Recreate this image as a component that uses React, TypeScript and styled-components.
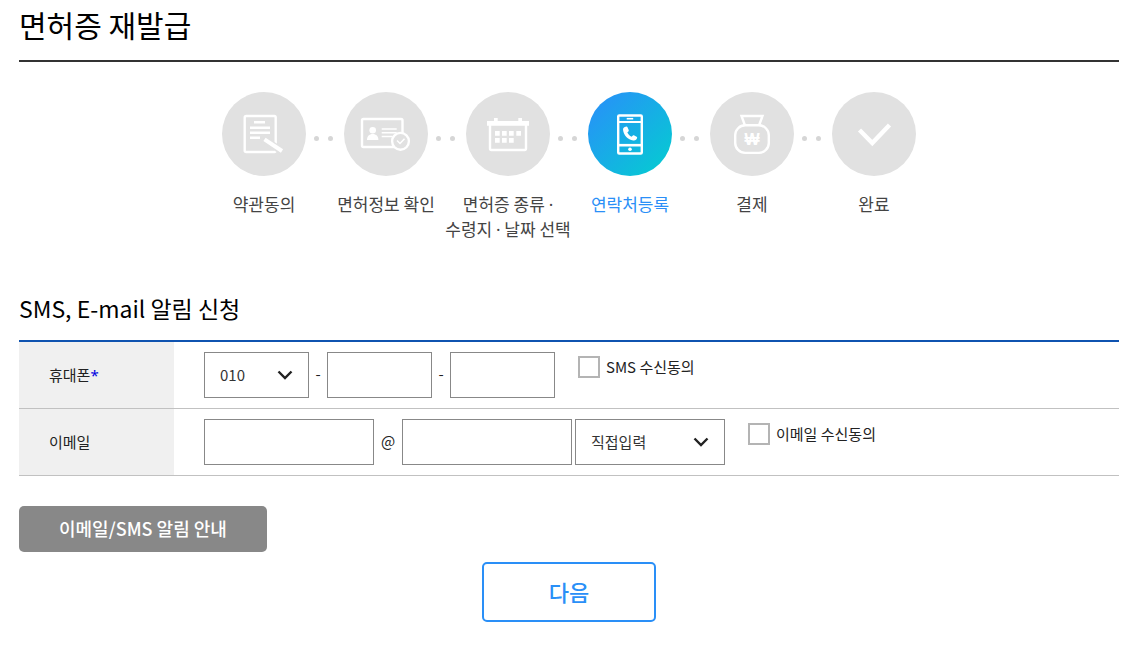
import React, { Fragment, useState } from "react";
import styled, { createGlobalStyle } from "styled-components";

const GlobalStyle = createGlobalStyle`
  *, *::before, *::after { box-sizing: border-box; }
  body {
    margin: 0;
    background: #fff;
    color: #222;
    font-family: "Noto Sans CJK KR", "Noto Sans", sans-serif;
    font-size: 15px;
  }
  button, input, select { font: inherit; color: inherit; }
`;

const Page = styled.main`
  padding: 0 11px 32px 19px;
`;

const PageTitle = styled.h1`
  margin: 0;
  padding: 2px 0 14px;
  border-bottom: 2px solid #333;
  color: #000;
  font-size: 30px;
  line-height: 44px;
  font-weight: 400;
`;

const Steps = styled.ol`
  display: flex;
  justify-content: center;
  margin: 30px 0 0;
  padding: 0;
  list-style: none;
`;

const StepItem = styled.li`
  display: flex;
  align-items: flex-start;
`;

const StepBody = styled.div`
  display: flex;
  flex-direction: column;
  align-items: center;
  gap: 15px;
  width: 84px;
`;

const StepCircle = styled.span<{ $active: boolean }>`
  display: block;
  width: 84px;
  height: 84px;
  border-radius: 50%;
  background: ${(p) =>
    p.$active ? "linear-gradient(135deg, #2a8dfb 0%, #03cfcf 100%)" : "#e1e1e1"};
`;

const StepIcon = styled.svg`
  display: block;
  width: 84px;
  height: 84px;
  fill: none;
  stroke: #fff;
  stroke-width: 2.4;
`;

const StepLabel = styled.span<{ $active: boolean }>`
  color: ${(p) => (p.$active ? "#2a8ff7" : "#444")};
  font-size: 17px;
  line-height: 25px;
  text-align: center;
  white-space: pre;
`;

const MiddleDot = styled.span`
  font-family: "Noto Sans", sans-serif;
  line-height: 1;
`;

const Dots = styled.span`
  display: flex;
  gap: 9px;
  width: 38px;
  padding: 44px 0 0 8px;

  &::before,
  &::after {
    content: "";
    width: 5px;
    height: 5px;
    border-radius: 50%;
    background: #d6d6d6;
  }
`;

const SectionTitle = styled.h2`
  margin: 47px 0 0;
  padding-bottom: 12px;
  color: #000;
  font-size: 23px;
  line-height: 40px;
  font-weight: 400;
`;

const FormTable = styled.table`
  width: 100%;
  border-top: 2px solid #0f53b0;
  border-spacing: 0;
`;

const HeadCell = styled.th`
  width: 155px;
  padding: 0 0 2px 30px;
  border-bottom: 1px solid #c1c1c1;
  background: #f0f0f0;
  font-weight: 400;
  text-align: left;
`;

const Required = styled.span`
  color: #0000e0;
  font-family: "Noto Sans", sans-serif;
  line-height: 1;
`;

const DataCell = styled.td`
  padding: 10px 30px;
  border-bottom: 1px solid #c1c1c1;
`;

const Fields = styled.div`
  display: flex;
  align-items: center;
`;

const TextBox = styled.input<{ $width: number }>`
  width: ${(p) => p.$width}px;
  height: 46px;
  padding: 0 15px;
  border: 1px solid #888;
  border-radius: 0;
  background: #fff;
`;

const SelectWrap = styled.span<{ $width: number; $gap?: number }>`
  display: grid;
  align-items: center;
  width: ${(p) => p.$width}px;
  margin-left: ${(p) => p.$gap ?? 0}px;

  & > * { grid-area: 1 / 1; }
`;

const SelectBox = styled.select`
  width: 100%;
  height: 46px;
  padding: 0 40px 2px 15px;
  border: 1px solid #888;
  border-radius: 0;
  background: #fff;
  color: #333;
  appearance: none;
`;

const Chevron = styled.svg`
  justify-self: end;
  width: 16px;
  height: 10px;
  margin-right: 16px;
  fill: none;
  stroke: #222;
  stroke-width: 2.4;
  pointer-events: none;
`;

const Separator = styled.span<{ $width: number }>`
  width: ${(p) => p.$width}px;
  padding-bottom: 4px;
  text-align: center;
`;

const Consent = styled.label`
  display: flex;
  align-items: center;
  align-self: flex-start;
  gap: 6px;
  margin: 4px 0 0 23px;
  line-height: 22px;
`;

const CheckBox = styled.input`
  width: 22px;
  height: 22px;
  margin: 0;
  border: 2px solid #b4b4b4;
  background: #fff;
  appearance: none;

  &:checked {
    background: #2a8ff7;
    box-shadow: inset 0 0 0 3px #fff;
  }
`;

const GuideButton = styled.button`
  display: block;
  height: 46px;
  margin-top: 30px;
  padding: 0 40px 2px;
  border: 0;
  border-radius: 5px;
  background: #888;
  color: #fff;
  font-size: 18px;
  font-weight: 500;
`;

const NextButton = styled.button`
  display: block;
  width: 174px;
  height: 60px;
  margin: 10px auto 0;
  padding: 0 0 2px;
  border: 2px solid #2a8ff7;
  border-radius: 5px;
  background: #fff;
  color: #2a8ff7;
  font-size: 22px;
  font-weight: 500;
`;

const TermsIcon = () => (
  <StepIcon viewBox="0 0 84 84" aria-hidden="true">
    <rect x="22.7" y="24" width="31" height="36" rx="1.5" />
    <path d="M32 30.3h11M28 35.8h20M28 40.8h20M28 45.8h10" strokeWidth="2.6" />
    <path d="M41.5 47L61 60" stroke="#e1e1e1" strokeWidth="7" />
    <path d="M42.5 47.4L60 59" strokeWidth="4" />
  </StepIcon>
);

const LicenseIcon = () => (
  <StepIcon viewBox="0 0 84 84" aria-hidden="true">
    <rect x="18" y="27" width="40.5" height="28" rx="1.5" />
    <circle cx="28.7" cy="38.3" r="3.3" fill="#fff" stroke="none" />
    <path d="M23 48c0-3.8 2.2-6 5.7-6s5.7 2.2 5.7 6z" fill="#fff" stroke="none" />
    <path d="M37.7 37h15M37.7 40.7h15M37.7 44.5h11" strokeWidth="1.6" />
    <circle cx="56.5" cy="49.3" r="8.4" fill="#e1e1e1" />
    <path d="M53 48.5l3 3 4.5-4.8" strokeWidth="1.5" />
  </StepIcon>
);

const CalendarIcon = () => (
  <StepIcon viewBox="0 0 84 84" aria-hidden="true">
    <rect x="24" y="31" width="36" height="27" rx="1.5" />
    <path
      d="M21 29h7v-3h3.7v3h20.6v-3h3.7v3h7v4.7h-42z
         M29 39h4.7v4.7h-4.7zM36 39h4.7v4.7h-4.7zM43 39h4.7v4.7h-4.7zM50.3 39h4.7v4.7h-4.7z
         M29 46h4.7v4.7h-4.7zM36 46h4.7v4.7h-4.7zM43 46h4.7v4.7h-4.7z"
      fill="#fff"
      stroke="none"
    />
  </StepIcon>
);

const PhoneIcon = () => (
  <StepIcon viewBox="0 0 84 84" aria-hidden="true">
    <rect x="30.2" y="23.5" width="23.6" height="38" rx="1" />
    <path d="M30 30h24" strokeWidth="2" />
    <path d="M30 53.2h24" strokeWidth="2.6" />
    <path d="M38.7 26.7h6.5" strokeWidth="1.6" />
    <circle cx="42" cy="57.3" r="1.8" fill="#fff" stroke="none" />
    <path
      d="M36.8 34.9l1.7-.4c.5 0 .8.2 1 .7l1.2 2.9c.2.6.1 1-.3 1.4l-1.1 1.1c1 2 2.3 3.3 4.3 4.2l1.3-1.2c.4-.4.9-.5 1.4-.2l2.3 1.3c.5.3.7.7.5 1.3-.5 1.8-1.8 2.7-3.9 2.4-5.3-.8-9.5-5.2-10.1-10.2-.2-1.7.3-2.9 1.7-3.3z"
      fill="#fff"
      stroke="none"
    />
  </StepIcon>
);

const WonSign = styled.text`
  fill: #fff;
  stroke: none;
  font-family: "Liberation Sans", sans-serif;
  font-size: 16px;
  font-weight: 700;
  text-anchor: middle;
`;

const PaymentIcon = () => (
  <StepIcon viewBox="0 0 84 84" aria-hidden="true">
    <path d="M34.8 33l-3.3-9h21l-3.3 9" />
    <rect x="25.2" y="33.3" width="33.6" height="27.6" rx="10" />
    <WonSign x="42" y="53">₩</WonSign>
  </StepIcon>
);

const DoneIcon = () => (
  <StepIcon viewBox="0 0 84 84" aria-hidden="true">
    <path d="M27.5 38L40.3 51L57.5 33" strokeWidth="4.4" />
  </StepIcon>
);

const steps = [
  { label: "약관동의", Icon: TermsIcon },
  { label: "면허정보 확인", Icon: LicenseIcon },
  { label: "면허증 종류 ·\n수령지 · 날짜 선택", Icon: CalendarIcon },
  { label: "연락처등록", Icon: PhoneIcon },
  { label: "결제", Icon: PaymentIcon },
  { label: "완료", Icon: DoneIcon },
];

const CURRENT_STEP = 3;

const withDots = (label: string) =>
  label.split("·").map((part, i) => (
    <Fragment key={i}>
      {i > 0 && <MiddleDot>·</MiddleDot>}
      {part}
    </Fragment>
  ));

type DropDownProps = {
  id?: string;
  label: string;
  width: number;
  gap?: number;
  options: string[];
};

const DropDown = ({ id, label, width, gap, options }: DropDownProps) => (
  <SelectWrap $width={width} $gap={gap}>
    <SelectBox id={id} aria-label={label}>
      {options.map((option) => (
        <option key={option}>{option}</option>
      ))}
    </SelectBox>
    <Chevron viewBox="0 0 16 10" aria-hidden="true">
      <path d="M1.5 1.5L8 8L14.5 1.5" />
    </Chevron>
  </SelectWrap>
);

export default function App() {
  const [sms, setSms] = useState(false);
  const [mail, setMail] = useState(false);

  return (
    <>
      <GlobalStyle />
      <Page>
        <PageTitle>면허증 재발급</PageTitle>

        <Steps>
          {steps.map(({ label, Icon }, i) => (
            <StepItem key={label} aria-current={i === CURRENT_STEP ? "step" : undefined}>
              <StepBody>
                <StepCircle $active={i === CURRENT_STEP}>
                  <Icon />
                </StepCircle>
                <StepLabel $active={i === CURRENT_STEP}>{withDots(label)}</StepLabel>
              </StepBody>
              {i < steps.length - 1 && <Dots />}
            </StepItem>
          ))}
        </Steps>

        <SectionTitle>SMS, E-mail 알림 신청</SectionTitle>
        <FormTable>
          <tbody>
            <tr>
              <HeadCell scope="row">
                <label htmlFor="phone1">
                  휴대폰<Required>*</Required>
                </label>
              </HeadCell>
              <DataCell>
                <Fields>
                  <DropDown
                    id="phone1"
                    label="휴대폰 앞자리"
                    width={105}
                    options={["010", "011", "016", "017", "018", "019"]}
                  />
                  <Separator $width={18}>-</Separator>
                  <TextBox type="tel" aria-label="휴대폰 가운데 자리" maxLength={4} $width={105} />
                  <Separator $width={18}>-</Separator>
                  <TextBox type="tel" aria-label="휴대폰 끝자리" maxLength={4} $width={105} />
                  <Consent>
                    <CheckBox
                      type="checkbox"
                      checked={sms}
                      onChange={(e) => setSms(e.target.checked)}
                    />
                    SMS 수신동의
                  </Consent>
                </Fields>
              </DataCell>
            </tr>
            <tr>
              <HeadCell scope="row">
                <label htmlFor="mail1">이메일</label>
              </HeadCell>
              <DataCell>
                <Fields>
                  <TextBox id="mail1" type="text" $width={170} />
                  <Separator $width={28}>@</Separator>
                  <TextBox type="text" aria-label="이메일 도메인" $width={170} />
                  <DropDown
                    label="이메일 도메인 선택"
                    width={150}
                    gap={3}
                    options={["직접입력", "naver.com", "hanmail.net", "gmail.com"]}
                  />
                  <Consent>
                    <CheckBox
                      type="checkbox"
                      checked={mail}
                      onChange={(e) => setMail(e.target.checked)}
                    />
                    이메일 수신동의
                  </Consent>
                </Fields>
              </DataCell>
            </tr>
          </tbody>
        </FormTable>

        <GuideButton type="button">이메일/SMS 알림 안내</GuideButton>
        <NextButton type="button">다음</NextButton>
      </Page>
    </>
  );
}
